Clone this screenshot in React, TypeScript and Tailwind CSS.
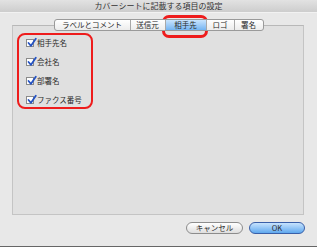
import React from "react";

const font = { fontFamily: '"Noto Sans CJK JP", "Noto Sans", sans-serif' };

function Check() {
  return (
    <div className="relative w-[8px] h-[8px] bg-white border border-[#8a8a8a] shrink-0">
      <svg
        width="10"
        height="10"
        viewBox="0 0 10 10"
        className="absolute -top-[2px] -left-[0px] overflow-visible"
      >
        <path d="M1.5 5 L4 7.8 L8.8 0.8" fill="none" stroke="#2452c2" strokeWidth="1.8" strokeLinecap="round" strokeLinejoin="round" />
      </svg>
    </div>
  );
}

const tabs = [
  { label: "ラベルとコメント", w: "w-[75px]" },
  { label: "送信元", w: "w-[35px]" },
  { label: "相手先", w: "w-[41px]", sel: true },
  { label: "ロゴ", w: "w-[28px]" },
  { label: "署名", w: "w-[29px]" },
];

export default function App() {
  return (
    <div className="relative w-[317px] h-[247px] bg-[#e8e8e8] overflow-hidden flex flex-col text-[#2a2a2a]" style={font}>
      <div className="h-[12px] bg-gradient-to-b from-[#e2e2e2] to-[#cdcdcd] text-center text-[8px] leading-[12px] text-[#333]">
        カバーシートに記載する項目の設定
      </div>
      <div className="h-[1px] bg-[#f2f2f2]" />

      <div className="mt-[6px] h-[12px] flex justify-center relative z-10">
        <div className="flex h-[12px] border border-[#9a9a9a] rounded-[3px] overflow-hidden bg-gradient-to-b from-[#ffffff] to-[#ececec]">
          {tabs.map((t, i) => (
            <div
              key={t.label}
              className={`${t.w} flex items-center justify-center text-[7.5px] leading-none ${
                i > 0 ? "border-l border-[#a8a8a8]" : ""
              } ${t.sel ? "bg-gradient-to-b from-[#c9e4fd] to-[#74b4f1]" : ""}`}
            >
              {t.label}
            </div>
          ))}
        </div>
      </div>

      <div className="-mt-[6px] ml-[12px] w-[292px] h-[190px] bg-[#e0e0e0] border border-[#c4c4c4] border-t-[#b8b8b8] relative">
        <div className="pt-[7px] pl-[13px] flex flex-col">
          {["相手先名", "会社名", "部署名", "ファクス番号"].map((s) => (
            <div key={s} className="h-[19px] flex items-center gap-[3px]">
              <Check />
              <span className="text-[7.5px] leading-none">{s}</span>
            </div>
          ))}
        </div>
      </div>

      <div className="mt-[7px] flex justify-end gap-[6px] pr-[12px]">
        <div className="w-[57px] h-[12px] rounded-full border border-[#8c8c8c] bg-gradient-to-b from-[#ffffff] to-[#dedede] flex items-center justify-center text-[7.5px] leading-none">
          キャンセル
        </div>
        <div className="w-[56px] h-[12px] rounded-full border border-[#3a5fa8] bg-gradient-to-b from-[#c7e3fd] to-[#5ea8ee] flex items-center justify-center text-[7.5px] leading-none">
          OK
        </div>
      </div>

      <div className="mt-auto h-[1px] bg-[#666]" />

      <div className="absolute left-[162px] top-[15px] w-[46px] h-[23px] border-[3px] border-[#ee1c1c] rounded-[7px]" />
      <div className="absolute left-[17px] top-[33px] w-[76px] h-[76px] border-[2.5px] border-[#ee1c1c] rounded-[8px]" />
    </div>
  );
}
